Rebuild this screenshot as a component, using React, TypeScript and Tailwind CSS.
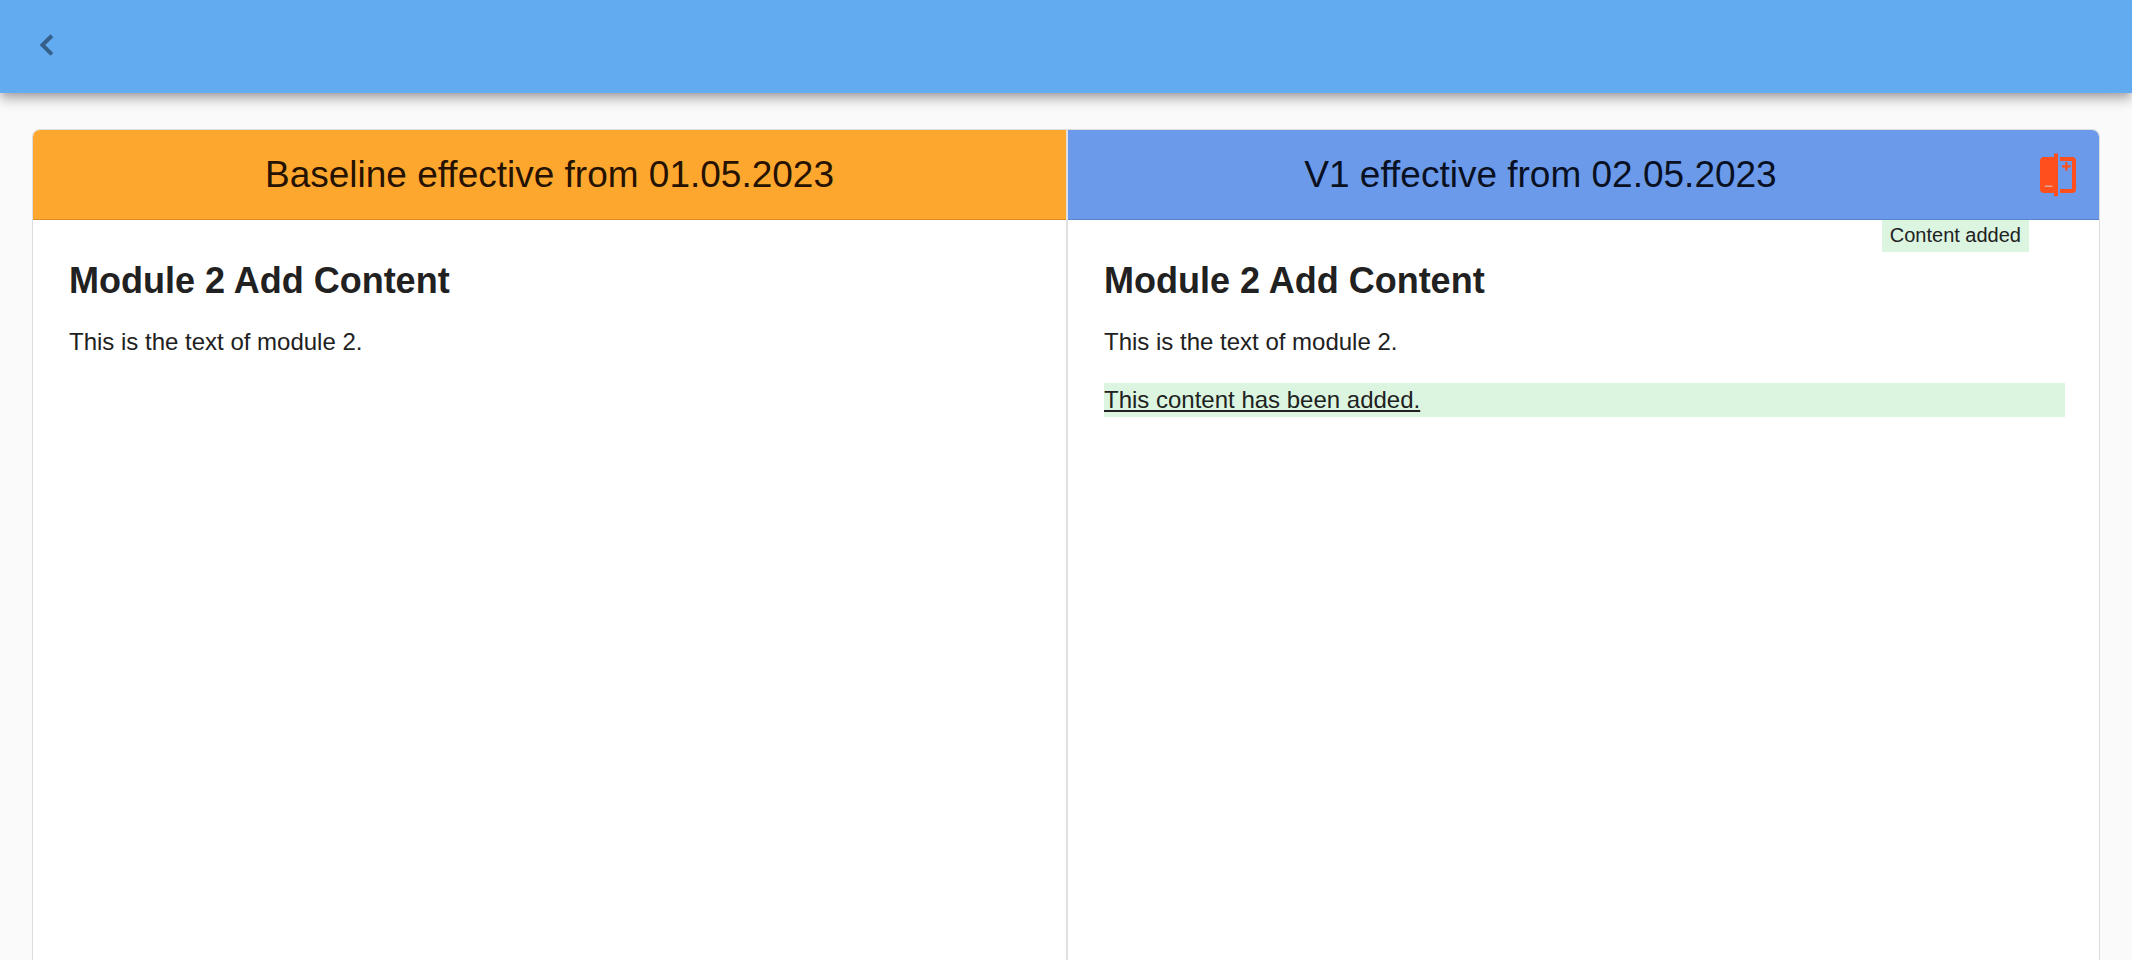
import type { ReactNode } from "react";

function ChevronLeftIcon() {
  return (
    <svg viewBox="0 0 24 24" className="w-[42px] h-[42px]" fill="currentColor" aria-hidden="true">
      <path d="M15.6 7.5 14 5.9l-6.2 6.1 6.2 6.1 1.6-1.6L11 12z" />
    </svg>
  );
}

function CompareIcon() {
  return (
    <svg viewBox="0 0 24 24" className="w-12 h-12" aria-hidden="true">
      <path
        fill="currentColor"
        d="M10 1.3h2v21.3h-2V21H5a2 2 0 0 1-2-2V5a2 2 0 0 1 2-2h5zM13 3h6a2 2 0 0 1 2 2v14a2 2 0 0 1-2 2h-6v-2h6V5h-6z"
      />
      {/* minus / plus */}
      <path d="M5.4 17.6h3.8" stroke="#e2a59b" strokeWidth="0.7" />
      <path d="M14 7.7h4.3M16.15 5.5v4.4" stroke="currentColor" strokeWidth="1.1" />
    </svg>
  );
}

type PanelProps = {
  title: string;
  headerClass: string;
  className?: string;
  action?: ReactNode;
  children: ReactNode;
};

function VersionPanel({ title, headerClass, className = "", action, children }: PanelProps) {
  return (
    <section className={`flex flex-col ${className}`}>
      <header className={`flex items-center h-[90px] border-b border-black/15 ${headerClass}`}>
        <h1 className="flex-1 text-center text-[37px] leading-[48px]">{title}</h1>
        {action}
      </header>
      <div className="relative flex-1 pt-[37px] pl-9 pr-[34px]">{children}</div>
    </section>
  );
}

export default function App() {
  return (
    <div
      className="min-h-screen flex flex-col bg-[#fafafa] text-[#212121]"
      style={{ fontFamily: '"Liberation Sans", Arial, sans-serif' }}
    >
      {/* TOOLBAR */}
      <nav className="flex items-center h-[93px] px-[26px] pb-1 bg-[#63abf0] shadow-[0_4px_8px_-2px_rgba(0,0,0,0.2),0_8px_10px_0_rgba(0,0,0,0.14),0_2px_20px_0_rgba(0,0,0,0.12)]">
        <button type="button" aria-label="Back" className="text-[#35608a]">
          <ChevronLeftIcon />
        </button>
      </nav>

      {/* COMPARISON */}
      <main className="flex-1 flex flex-col px-8 pt-9">
        <div className="flex-1 grid grid-cols-2 bg-white border border-b-0 border-[#dddddd] rounded-t-lg overflow-hidden">
          <VersionPanel
            title="Baseline effective from 01.05.2023"
            headerClass="bg-[#fea72f] text-[#261200]"
          >
            <h2 className="text-[36px] leading-[48px] font-bold">Module 2 Add Content</h2>
            <p className="mt-5 text-[24px] leading-[34px]">This is the text of module 2.</p>
          </VersionPanel>

          <VersionPanel
            title="V1 effective from 02.05.2023"
            headerClass="bg-[#6c9aea] text-[#091022]"
            className="border-l-2 border-[#e0e0e0]"
            action={
              <button
                type="button"
                aria-label="Compare versions"
                className="w-[86px] pr-[17px] flex justify-end text-[#ff4f1c]"
              >
                <CompareIcon />
              </button>
            }
          >
            <span className="absolute top-0 right-[70px] px-2 pb-0.5 bg-[#dcf5e1] text-[20px] leading-[30px]">
              Content added
            </span>
            <h2 className="text-[36px] leading-[48px] font-bold">Module 2 Add Content</h2>
            <p className="mt-5 text-[24px] leading-[34px]">This is the text of module 2.</p>
            <p className="mt-6 bg-[#dcf5e1] text-[24px] leading-[34px]">
              <ins className="underline">This content has been added.</ins>
            </p>
          </VersionPanel>
        </div>
      </main>
    </div>
  );
}
